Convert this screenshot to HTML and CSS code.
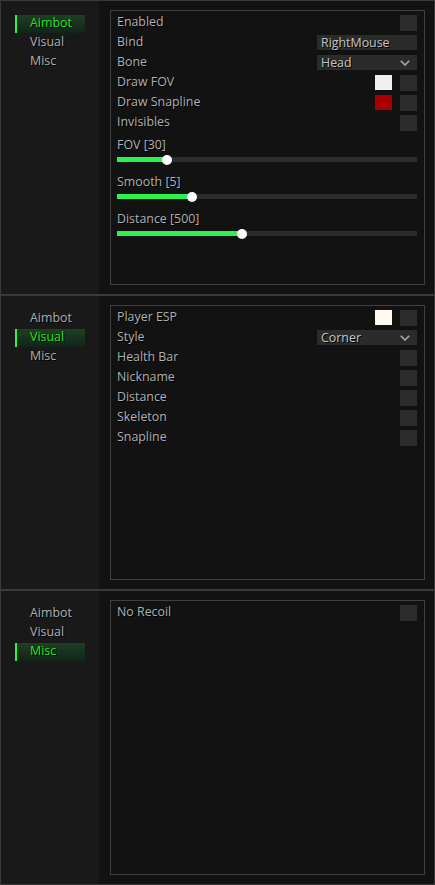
FILE: index.html
```html
<!DOCTYPE html>
<html>
<head>
<meta charset="utf-8">
<link rel="stylesheet" href="styles.css">
</head>
<body>
<div class="panel">
  <nav class="tabs">
    <div class="tab active">Aimbot</div>
    <div class="tab">Visual</div>
    <div class="tab">Misc</div>
  </nav>
  <main class="main">
    <section class="box">
      <div class="row"><span class="label">Enabled</span><span class="check"></span></div>
      <div class="row"><span class="label">Bind</span><span class="field">RightMouse</span></div>
      <div class="row"><span class="label">Bone</span><span class="field select">Head<svg class="chev" width="10" height="6" viewBox="0 0 10 6"><polyline points="0.8,0.8 5,5 9.2,0.8" fill="none" stroke="#a8a8a8" stroke-width="1.6"/></svg></span></div>
      <div class="row"><span class="label">Draw FOV</span><span class="swatch white"></span><span class="check"></span></div>
      <div class="row"><span class="label">Draw Snapline</span><span class="swatch red"></span><span class="check"></span></div>
      <div class="row"><span class="label">Invisibles</span><span class="check"></span></div>
      <div class="sliders">
        <div class="slider">
          <div class="slabel">FOV [30]</div>
          <div class="track"><div class="fill" style="width:50px"><span class="thumb"></span></div></div>
        </div>
        <div class="slider">
          <div class="slabel">Smooth [5]</div>
          <div class="track"><div class="fill" style="width:75px"><span class="thumb"></span></div></div>
        </div>
        <div class="slider">
          <div class="slabel">Distance [500]</div>
          <div class="track"><div class="fill" style="width:125px"><span class="thumb"></span></div></div>
        </div>
      </div>
    </section>
  </main>
</div>

<div class="panel">
  <nav class="tabs">
    <div class="tab">Aimbot</div>
    <div class="tab active">Visual</div>
    <div class="tab">Misc</div>
  </nav>
  <main class="main">
    <section class="box">
      <div class="row"><span class="label">Player ESP</span><span class="swatch cream"></span><span class="check"></span></div>
      <div class="row"><span class="label">Style</span><span class="field select">Corner<svg class="chev" width="10" height="6" viewBox="0 0 10 6"><polyline points="0.8,0.8 5,5 9.2,0.8" fill="none" stroke="#a8a8a8" stroke-width="1.6"/></svg></span></div>
      <div class="row"><span class="label">Health Bar</span><span class="check"></span></div>
      <div class="row"><span class="label">Nickname</span><span class="check"></span></div>
      <div class="row"><span class="label">Distance</span><span class="check"></span></div>
      <div class="row"><span class="label">Skeleton</span><span class="check"></span></div>
      <div class="row"><span class="label">Snapline</span><span class="check"></span></div>
    </section>
  </main>
</div>

<div class="panel">
  <nav class="tabs">
    <div class="tab">Aimbot</div>
    <div class="tab">Visual</div>
    <div class="tab active">Misc</div>
  </nav>
  <main class="main">
    <section class="box">
      <div class="row"><span class="label">No Recoil</span><span class="check"></span></div>
    </section>
  </main>
</div>
</body>
</html>
```

FILE: styles.css
```css
* { box-sizing: border-box; }

html, body {
  margin: 0;
  padding: 0;
  background: #121212;
}

body {
  width: 435px;
  font-family: "Open Sans", "Noto Sans", sans-serif;
  font-size: 12.4px;
  color: #b0b0b0;
  text-shadow: 1px 1px 0 #000;
}

.panel {
  height: 295px;
  border: 1px solid #3a3a3a;
  display: flex;
  background: #121212;
}

.tabs {
  width: 98px;
  flex: none;
  background: #191919;
  padding: 14px 0 0 14px;
  display: flex;
  flex-direction: column;
  gap: 1px;
}

.tab {
  width: 70px;
  height: 18px;
  line-height: 16px;
  padding-left: 15px;
  color: #b0b0b0;
}

.tab.active {
  padding-left: 13px;
  border-left: 2px solid #2ef04e;
  background: linear-gradient(#1f3f24, #13231a);
  color: #22e622;
}

.main {
  flex: 1;
  display: flex;
  padding: 9px 9px 9px 11px;
}

.box {
  flex: 1;
  border: 1px solid #404040;
  padding: 4px 7px 0 6px;
  display: flex;
  flex-direction: column;
}

.row {
  height: 16px;
  margin-bottom: 4px;
  display: flex;
  align-items: flex-start;
  gap: 8px;
}

.label {
  flex: 1;
  line-height: 14px;
}

.check {
  width: 17px;
  height: 16px;
  background: #2c2c2c;
  flex: none;
}

.swatch {
  width: 17px;
  height: 15px;
  flex: none;
}

.swatch.white { background: #f0f0f0; }
.swatch.red { background: #a80000; }
.swatch.cream { background: #fff9f2; }

.field {
  width: 100px;
  height: 15px;
  background: #2b2b2b;
  color: #c4c4c4;
  padding-left: 4px;
  line-height: 14px;
  display: flex;
  justify-content: space-between;
  align-items: center;
}

.chev {
  margin-right: 7px;
  margin-top: 1px;
}

.sliders {
  margin-top: 3px;
  display: flex;
  flex-direction: column;
}

.slider {
  margin-bottom: 13px;
}

.slabel {
  line-height: 14px;
}

.track {
  margin-top: 5px;
  height: 5px;
  background: #2c2c2c;
}

.fill {
  position: relative;
  height: 5px;
  background: #2ef04e;
}

.thumb {
  position: absolute;
  right: -5px;
  top: -2.5px;
  width: 10px;
  height: 10px;
  border-radius: 50%;
  background: #ffffff;
}
```
